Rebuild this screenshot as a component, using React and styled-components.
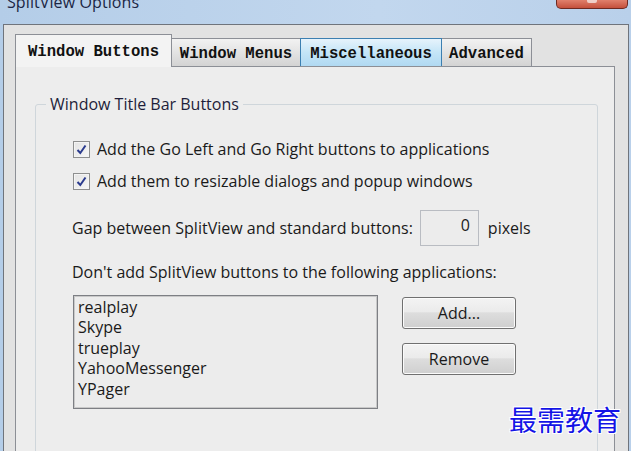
import React from "react";
import styled, { createGlobalStyle } from "styled-components";

const Global = createGlobalStyle`
  html, body { margin: 0; padding: 0; }
  body { font-family: "Open Sans", "Noto Sans", sans-serif; }
`;

const Root = styled.div`
  position: relative;
  width: 631px;
  height: 451px;
  overflow: hidden;
  background: linear-gradient(90deg, #b4cde8 0%, #c2d7ee 60%, #b9d0ea 100%);
  display: flex;
  flex-direction: column;
`;

const TitleBar = styled.div`
  height: 24px;
  flex: none;
  display: flex;
  align-items: flex-start;
  padding-left: 7px;
`;

const Title = styled.div`
  font-family: "Open Sans", "Noto Sans", sans-serif;
  font-size: 16px;
  line-height: 16px;
  margin-top: -6px;
  color: #1b2644;
  letter-spacing: 0.1px;
`;

const CloseButton = styled.div`
  margin-left: auto;
  margin-right: 3px;
  width: 70px;
  height: 8px;
  border: 1px solid #6e2a22;
  border-top: none;
  border-radius: 0 0 5px 5px;
  background: linear-gradient(180deg, #e0806c 0%, #c4503c 100%);
  display: flex;
  justify-content: center;
`;

const CloseGlyph = styled.div`
  width: 10px;
  height: 3px;
  background: #f4e6e2;
  border-radius: 0 0 2px 2px;
  opacity: 0.8;
`;

const WindowBody = styled.div`
  flex: 1;
  margin: 0 2px 0 3px;
  border: 1px solid #6f747c;
  border-bottom: none;
  background: #e2e2e2;
  padding: 9px 13px 0 11px;
  display: flex;
  flex-direction: column;
`;

const TabRow = styled.div`
  display: flex;
  align-items: flex-end;
  height: 33px;
  margin-bottom: -1px;
`;

const Tab = styled.div`
  position: relative;
  box-sizing: border-box;
  width: ${(p) => p.$w}px;
  margin-left: ${(p) => (p.$first ? 0 : -1)}px;
  height: ${(p) => (p.$active ? 33 : 29)}px;
  border: 1px solid #8c8f96;
  border-bottom: ${(p) => (p.$active ? "none" : "1px solid #8c8f96")};
  z-index: ${(p) => (p.$active ? 2 : p.$hover ? 1 : 0)};
  border-color: ${(p) => (p.$hover ? "#3c7fb1" : "#8c8f96")};
  background: ${(p) =>
    p.$active
      ? "#f3f3f3"
      : p.$hover
      ? "linear-gradient(180deg, #e6f3fc 0%, #c4e5f7 50%, #b0d9f2 100%)"
      : "linear-gradient(180deg, #f2f2f2 0%, #e3e3e3 50%, #d3d3d3 100%)"};
  font-family: "Liberation Mono", "DejaVu Sans Mono", monospace;
  font-weight: bold;
  font-size: 15.6px;
  color: #111;
  display: flex;
  justify-content: center;
  align-items: center;
  padding-top: ${(p) => (p.$active ? 1 : 3)}px;
  white-space: nowrap;
`;

const Panel = styled.div`
  flex: 1;
  position: relative;
  z-index: 1;
  border: 1px solid #8c8f96;
  border-bottom: none;
  background: #ededed;
  padding: 27px 16px 0 19px;
`;

const Group = styled.fieldset`
  margin: 0;
  padding: 0;
  border: 1px solid #cfd6db;
  border-radius: 3px;
  min-height: 400px;
`;

const Legend = styled.legend`
  margin-left: 10px;
  padding: 0 4px;
  font-size: 16px;
  line-height: 20px;
  color: #1e1e3a;
`;

const Content = styled.div`
  padding: 23px 0 0 36px;
  display: flex;
  flex-direction: column;
  font-size: 16px;
  color: #1a1a1a;
`;

const CheckRow = styled.label`
  display: flex;
  align-items: center;
  height: 24px;
  margin-top: ${(p) => p.$mt || 0}px;
  margin-left: 1px;
  gap: 7px;
  white-space: nowrap;
`;

const Box = styled.span`
  box-sizing: border-box;
  width: 17px;
  height: 17px;
  border: 1px solid #8e8f8f;
  background: linear-gradient(135deg, #e4e4e4 0%, #f6f6f6 100%);
  box-shadow: inset 0 0 0 1px #f4f4f4;
  display: flex;
  align-items: center;
  justify-content: center;
`;

const Line = styled.div`
  display: flex;
  align-items: center;
  margin-top: ${(p) => p.$mt || 0}px;
  height: ${(p) => p.$h || 20}px;
  white-space: nowrap;
`;

const NumberBox = styled.div`
  box-sizing: border-box;
  width: 59px;
  height: 36px;
  margin-left: 7px;
  margin-right: 9px;
  border: 1px solid #b9bcc2;
  background: #ececec;
  text-align: right;
  padding: 4px 8px 0 0;
  line-height: 20px;
`;

const ListArea = styled.div`
  display: flex;
  margin-top: 13px;
  margin-left: 1px;
`;

const ListBox = styled.div`
  box-sizing: border-box;
  width: 305px;
  height: 114px;
  border: 1px solid #7d7f84;
  box-shadow: inset 0 0 0 1px #c9c9c9;
  background: #ececec;
  padding: 1px 4px;
  line-height: 20.4px;
`;

const Buttons = styled.div`
  display: flex;
  flex-direction: column;
  gap: 14px;
  margin-left: 24px;
  padding-top: 2px;
`;

const Button = styled.div`
  box-sizing: border-box;
  width: 114px;
  height: 32px;
  border: 1px solid #707070;
  border-radius: 3px;
  background: linear-gradient(180deg, #f3f3f3 0%, #ebebeb 45%, #dddddd 50%, #cfcfcf 100%);
  box-shadow: inset 0 0 0 1px #fbfbfb;
  display: flex;
  align-items: center;
  justify-content: center;
  color: #1a1a1a;
`;

const Watermark = styled.div`
  position: absolute;
  z-index: 10;
  left: 509px;
  top: 401px;
  white-space: nowrap;
  font-family: "Noto Sans CJK SC", sans-serif;
  font-size: 28px;
  font-weight: 400;
  line-height: 36px;
  color: #1414e6;
  text-shadow: 1px 1px 0 #fff, -1px -1px 0 #fff, 1px -1px 0 #fff, -1px 1px 0 #fff;
`;

const Check = () => (
  <svg width="13" height="13" viewBox="0 0 13 13">
    <path d="M2.5 7 L5.3 10 L10.5 2.5" fill="none" stroke="#2b3b8e" strokeWidth="2" />
  </svg>
);

export default function App() {
  const apps = ["realplay", "Skype", "trueplay", "YahooMessenger", "YPager"];
  return (
    <>
      <Global />
      <Root>
        <TitleBar>
          <Title>SplitView Options</Title>
          <CloseButton>
            <CloseGlyph />
          </CloseButton>
        </TitleBar>
        <WindowBody>
          <TabRow>
            <Tab $first $active $w={157}>Window Buttons</Tab>
            <Tab $w={130}>Window Menus</Tab>
            <Tab $hover $w={142}>Miscellaneous</Tab>
            <Tab $w={91}>Advanced</Tab>
          </TabRow>
          <Panel>
            <Group>
              <Legend>Window Title Bar Buttons</Legend>
              <Content>
                <CheckRow>
                  <Box><Check /></Box>
                  Add the Go Left and Go Right buttons to applications
                </CheckRow>
                <CheckRow $mt={8}>
                  <Box><Check /></Box>
                  Add them to resizable dialogs and popup windows
                </CheckRow>
                <Line $mt={17} $h={36}>
                  Gap between SplitView and standard buttons:
                  <NumberBox>0</NumberBox>
                  pixels
                </Line>
                <Line $mt={16}>Don't add SplitView buttons to the following applications:</Line>
                <ListArea>
                  <ListBox>
                    {apps.map((a) => (
                      <div key={a}>{a}</div>
                    ))}
                  </ListBox>
                  <Buttons>
                    <Button>Add...</Button>
                    <Button>Remove</Button>
                  </Buttons>
                </ListArea>
              </Content>
            </Group>
          </Panel>
        </WindowBody>
        <Watermark>最需教育</Watermark>
      </Root>
    </>
  );
}
